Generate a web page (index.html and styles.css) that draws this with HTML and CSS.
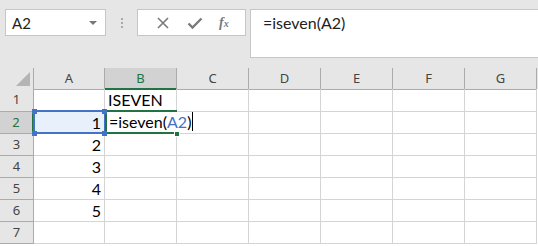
FILE: index.html
```html
<!DOCTYPE html>
<html lang="en">
<head>
    <meta charset="UTF-8">
    <title>Sheet</title>
    <link rel="stylesheet" href="styles.css">
</head>
<body>
    <!-- Toolbar -->
    <div class="toolbar">
        <div class="namebox">
            <span>A2</span>
            <span class="caret"></span>
        </div>
        <div class="grip"><i></i><i></i><i></i></div>
        <div class="fbuttons">
            <svg width="14" height="14" viewBox="0 0 14 14"><path d="M2 2L12 12M12 2L2 12" stroke="#7a7a7a" stroke-width="1.6" fill="none"/></svg>
            <svg width="16" height="14" viewBox="0 0 16 14"><path d="M1.5 7.5L5.5 11.5L14.5 2.5" stroke="#7a7a7a" stroke-width="2.4" fill="none"/></svg>
            <span class="fx">f<small>x</small></span>
        </div>
        <div class="formula">=iseven(A2)</div>
    </div>

    <!-- Grid -->
    <div class="sheet">
        <div class="row head">
            <div class="cell corner"><span class="tri"></span></div>
            <div class="cell">A</div>
            <div class="cell sel-col">B</div>
            <div class="cell">C</div>
            <div class="cell">D</div>
            <div class="cell">E</div>
            <div class="cell">F</div>
            <div class="cell">G</div>
        </div>
        <div class="row first">
            <div class="cell rh">1</div>
            <div class="cell"></div>
            <div class="cell txt">ISEVEN</div>
            <div class="cell"></div><div class="cell"></div><div class="cell"></div><div class="cell"></div><div class="cell"></div>
        </div>
        <div class="row">
            <div class="cell rh sel-row">2</div>
            <div class="cell num refcell">1
                <span class="ref"></span>
                <span class="dot tl"></span><span class="dot tr"></span><span class="dot bl"></span><span class="dot br"></span>
            </div>
            <div class="cell txt active">
                <span class="edit">=iseven(<span class="blue">A2</span>)<span class="cursor"></span></span>
                <span class="handle"></span>
            </div>
            <div class="cell"></div><div class="cell"></div><div class="cell"></div><div class="cell"></div><div class="cell"></div>
        </div>
        <div class="row">
            <div class="cell rh">3</div>
            <div class="cell num">2</div>
            <div class="cell"></div><div class="cell"></div><div class="cell"></div><div class="cell"></div><div class="cell"></div><div class="cell"></div>
        </div>
        <div class="row">
            <div class="cell rh">4</div>
            <div class="cell num">3</div>
            <div class="cell"></div><div class="cell"></div><div class="cell"></div><div class="cell"></div><div class="cell"></div><div class="cell"></div>
        </div>
        <div class="row">
            <div class="cell rh">5</div>
            <div class="cell num">4</div>
            <div class="cell"></div><div class="cell"></div><div class="cell"></div><div class="cell"></div><div class="cell"></div><div class="cell"></div>
        </div>
        <div class="row">
            <div class="cell rh">6</div>
            <div class="cell num">5</div>
            <div class="cell"></div><div class="cell"></div><div class="cell"></div><div class="cell"></div><div class="cell"></div><div class="cell"></div>
        </div>
        <div class="row">
            <div class="cell rh">7</div>
            <div class="cell"></div>
            <div class="cell"></div><div class="cell"></div><div class="cell"></div><div class="cell"></div><div class="cell"></div><div class="cell"></div>
        </div>
    </div>
</body>
</html>
```

FILE: styles.css
```css
/* Reset */
* {
    margin: 0;
    padding: 0;
    box-sizing: border-box;
}

body {
    width: 538px;
    height: 246px;
    overflow: hidden;
    background: #fff;
    font-family: Lato, 'Liberation Sans', sans-serif;
    color: #000;
}

/* Toolbar */
.toolbar {
    height: 68px;
    background: #e6e6e6;
    display: flex;
    align-items: flex-start;
    padding: 9px 0 0 5px;
}

.namebox {
    width: 101px;
    height: 27px;
    background: #fff;
    border: 1px solid #c6c6c6;
    display: flex;
    align-items: center;
    justify-content: space-between;
    padding: 0 8px 0 6px;
    font-size: 15px;
    color: #222;
}

.caret {
    border-left: 4px solid transparent;
    border-right: 4px solid transparent;
    border-top: 4px solid #777;
}

.grip {
    width: 31px;
    height: 27px;
    display: flex;
    flex-direction: column;
    align-items: center;
    justify-content: center;
    gap: 2px;
}

.grip i {
    width: 2px;
    height: 2px;
    background: #a8a8a8;
}

.fbuttons {
    width: 109px;
    height: 27px;
    background: #fff;
    border: 1px solid #c6c6c6;
    display: flex;
    align-items: center;
    justify-content: space-around;
    padding: 0 8px 0 10px;
}

.fx {
    font-family: 'Liberation Serif', serif;
    font-style: italic;
    font-weight: bold;
    font-size: 14px;
    color: #7a7a7a;
}

.fx small {
    font-size: 10px;
}

.formula {
    margin-left: 4px;
    flex: 1;
    height: 49px;
    background: #fff;
    border: 1px solid #c6c6c6;
    border-right: none;
    padding: 3px 0 0 12px;
    font-size: 16px;
    color: #222;
}

/* Sheet */
.row {
    display: grid;
    grid-template-columns: 34px 71px repeat(6, 72px);
    height: 22px;
}

.row.head {
    height: 21px;
    background: #e6e6e6;
}

.row.first {
    height: 23px;
}

.cell {
    border-right: 1px solid #d4d4d4;
    border-bottom: 1px solid #d4d4d4;
    font-size: 16px;
    line-height: 21px;
    position: relative;
    white-space: nowrap;
}

.head .cell {
    border-right-color: #ababab;
    border-bottom-color: #ababab;
    font-family: 'Noto Sans', sans-serif;
    font-size: 13px;
    line-height: 20px;
    text-align: center;
    color: #444;
}

.corner .tri {
    position: absolute;
    right: 3px;
    bottom: 3px;
    border-left: 14px solid transparent;
    border-bottom: 14px solid #b4b4b4;
}

.head .sel-col {
    background: #d2d2d2;
    color: #217346;
    border-bottom: 2px solid #217346;
}

.rh {
    background: #e6e6e6;
    border-right-color: #ababab;
    border-bottom-color: #ababab;
    font-family: 'Noto Sans', sans-serif;
    font-size: 13px;
    text-align: center;
    color: #444;
}

.rh.sel-row {
    background: #d2d2d2;
    color: #217346;
    border-right: 2px solid #217346;
}

.num {
    text-align: right;
    padding-right: 3px;
}

.txt {
    padding-left: 3px;
}

/* Selection */
.refcell {
    background: #e8f0fb;
}

.ref {
    position: absolute;
    top: -2px;
    left: -1px;
    right: -2px;
    bottom: -1px;
    border: 2px solid #4472c4;
}

.dot {
    position: absolute;
    width: 5px;
    height: 5px;
    background: #4472c4;
    z-index: 4;
}

.dot.tl { top: -3px; left: -2px; }
.dot.tr { top: -3px; right: -3px; }
.dot.bl { bottom: -3px; left: -2px; }
.dot.br { bottom: -3px; right: -3px; }

.active {
    border-top: 2px solid #217346;
    border-bottom: 2px solid #217346;
    border-right: none;
    margin-top: -2px;
    height: 24px;
    line-height: 20px;
    z-index: 1;
}

.active::before {
    content: "";
    position: absolute;
    left: 0;
    top: -2px;
    bottom: -2px;
    width: 2px;
    background: #217346;
    z-index: 3;
}

.edit {
    position: absolute;
    left: 2px;
    top: 0;
    padding: 0 2px 0 2px;
    height: 20px;
    background: #fff;
    z-index: 2;
}

.blue {
    color: #4472c4;
}

.cursor {
    display: inline-block;
    width: 1px;
    height: 19px;
    background: #000;
    vertical-align: top;
    margin-left: 1px;
}

.handle {
    position: absolute;
    right: -3px;
    bottom: -5px;
    width: 6px;
    height: 6px;
    background: #217346;
    border: 1px solid #fff;
    z-index: 3;
}
```
